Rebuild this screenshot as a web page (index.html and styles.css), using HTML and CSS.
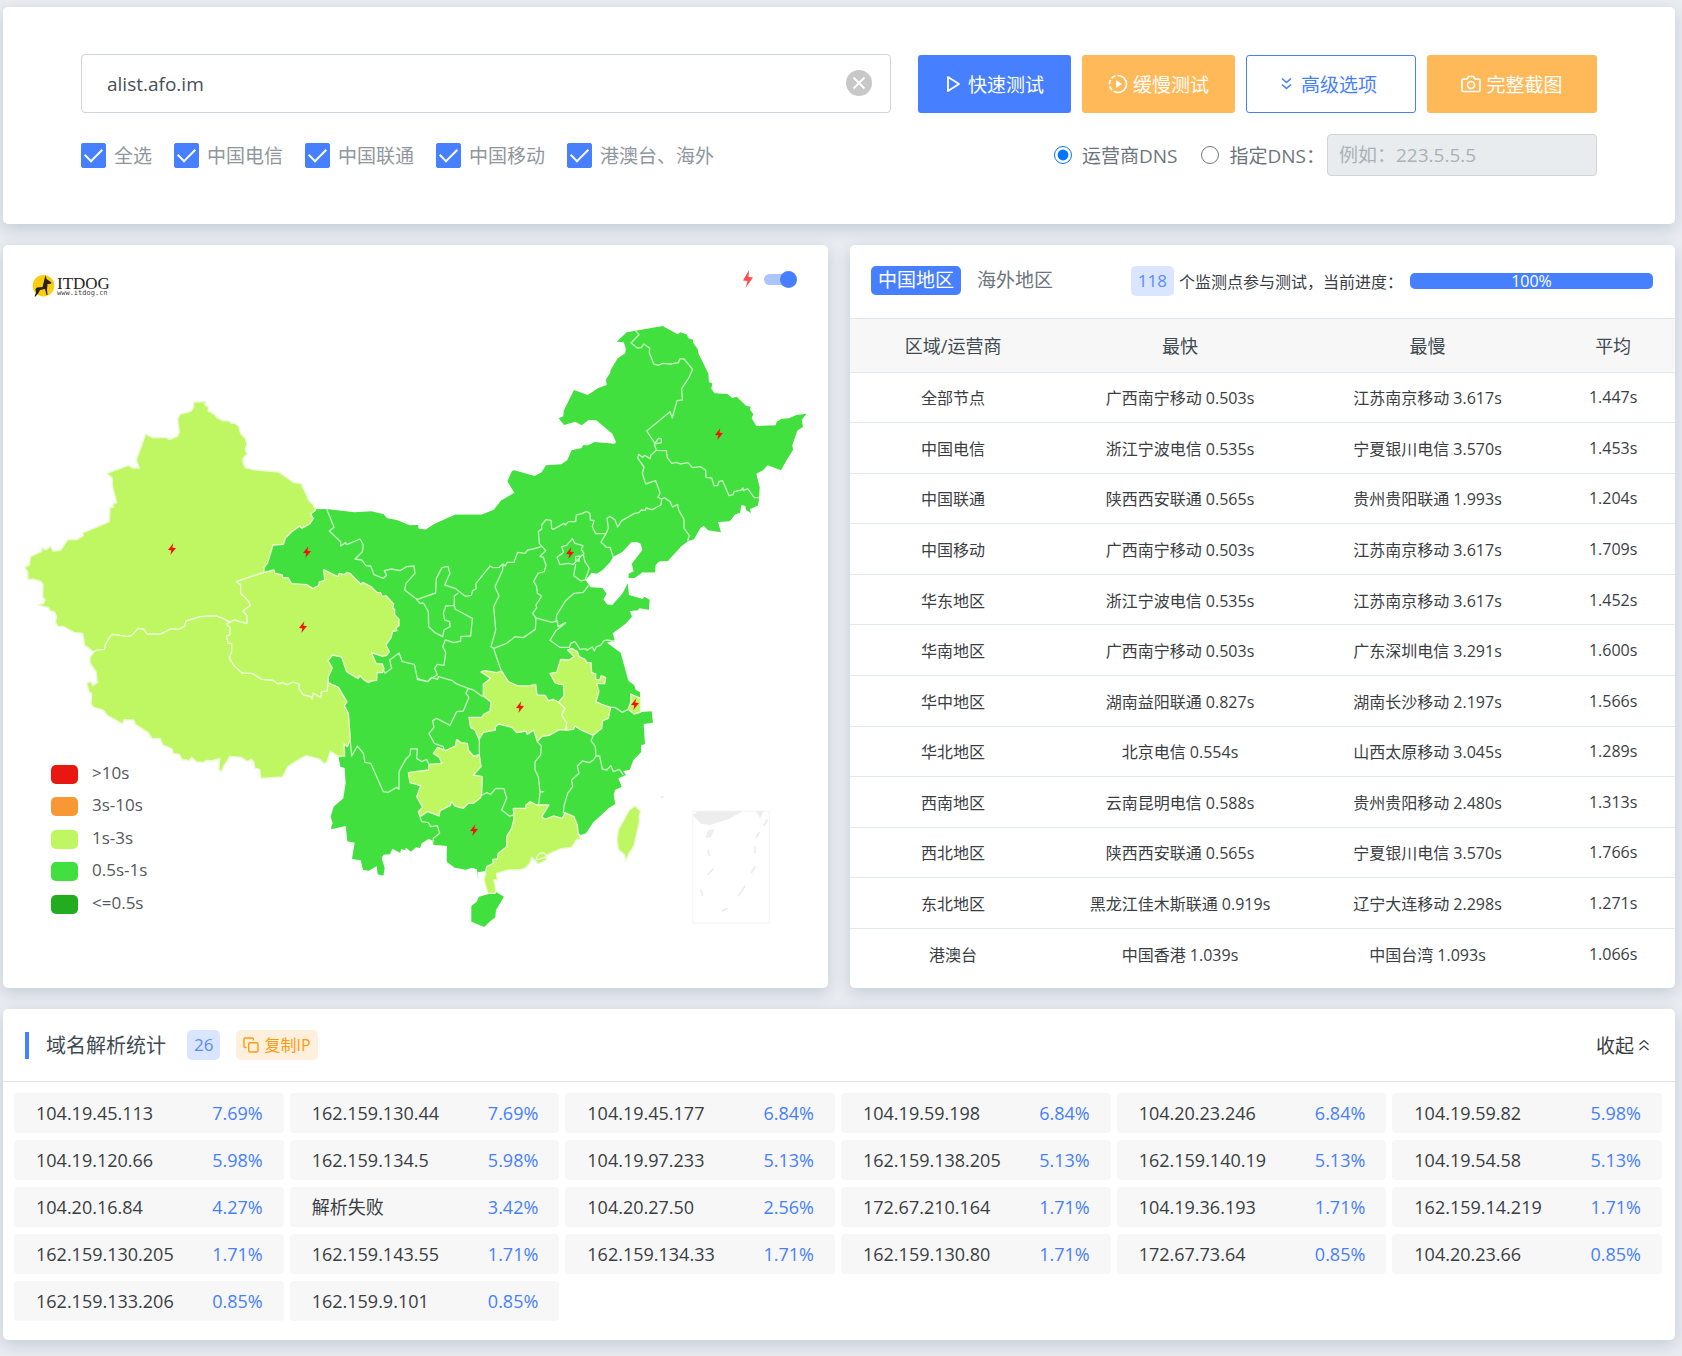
FILE: index.html
```html
<!DOCTYPE html>
<html lang="zh-CN">
<head>
    <meta charset="UTF-8">
    <meta name="viewport" content="width=device-width, initial-scale=1.0">
    <title>ITDOG 网站测速</title>
    <link rel="stylesheet" href="styles.css">
</head>
<body>
    <form class="card search">
        <div class="search-row">
            <div class="host-box">
                <input type="text" class="host" id="host" value="alist.afo.im" aria-label="域名">
                <button type="button" class="clear" aria-label="清空">
                    <svg viewBox="0 0 26 26" width="26" height="26"><circle cx="13" cy="13" r="13" fill="#c8c8c8"/><path d="M7.500 7.500 18.500 18.500M18.500 7.500 7.500 18.500" stroke="#fff" stroke-width="1.800"/></svg>
                </button>
            </div>
            <div class="buttons">
                <button type="button" class="btn btn-blue">
                    <svg viewBox="0 0 18 18" width="18" height="18"><path d="M3 2v14l11-7z" fill="none" stroke="currentColor" stroke-width="1.800" stroke-linejoin="round"/></svg>
                    快速测试
                </button>
                <button type="button" class="btn btn-orange">
                    <svg viewBox="0 0 20 20" width="20" height="20"><path d="M10 1.500a8.500 8.500 0 0 1 0 17" fill="none" stroke="currentColor" stroke-width="1.700"/><path d="M10 18.500a8.500 8.500 0 0 1 0-17" fill="none" stroke="currentColor" stroke-width="1.700" stroke-dasharray="4.500 2"/><path d="M8 6v8l6-4z" fill="currentColor"/></svg>
                    缓慢测试
                </button>
                <button type="button" class="btn btn-outline">
                    <svg viewBox="0 0 12 20" width="12" height="20"><path d="m1 4.500 4.500 4 4.500-4M1 10.500l4.500 4 4.500-4" fill="none" stroke="currentColor" stroke-width="1.600"/></svg>
                    高级选项
                </button>
                <button type="button" class="btn btn-orange">
                    <svg viewBox="0 0 20 18" width="20" height="18"><path d="M2.500 4H6l1.500-2.500h5L14 4h3.500q1.500 0 1.500 1.500v9.500q0 1.500-1.500 1.500h-15Q1 16.500 1 15V5.500Q1 4 2.500 4z" fill="none" stroke="currentColor" stroke-width="1.700"/><circle cx="10" cy="10" r="3.500" fill="none" stroke="currentColor" stroke-width="1.700"/></svg>
                    完整截图
                </button>
            </div>
        </div>
        <div class="option-row">
            <div class="checks">
                <label><input type="checkbox" checked>全选</label>
                <label><input type="checkbox" checked>中国电信</label>
                <label><input type="checkbox" checked>中国联通</label>
                <label><input type="checkbox" checked>中国移动</label>
                <label><input type="checkbox" checked>港澳台、海外</label>
            </div>
            <div class="dns">
                <label><input type="radio" name="dns" checked>运营商DNS</label>
                <label><input type="radio" name="dns">指定DNS：</label>
                <input type="text" class="dns-input" placeholder="例如：223.5.5.5" aria-label="DNS" disabled>
            </div>
        </div>
    </form>

    <div class="main">
        <div class="card map-card">
            <svg class="map" viewBox="3 245 825 743">
                <defs>
                    <path id="bolt" d="M4-17-12 3-2 4-5 18 12-3 1-4z" fill="#f5130b"/>
                </defs>

                <!-- logo -->
                <circle cx="43.500" cy="285.700" r="10.800" fill="#fbcd10"/>
                <path d="M45.500 275l1 4 5 3.500-.500 1.200-3.500.300-.500 6 .5 5h-1l-1.500-6-5 1-1.500 3-3 3.500h-1l1.500-4-.5-3.500 1.500-1.500 5.500-.500z" fill="#2b2014"/>
                <text class="logo-text" x="57" y="289">ITDOG</text>
                <text class="logo-url" x="57" y="295">www.itdog.cn</text>

                <!-- green base -->
                <g class="green" transform="translate(400 310) scale(.33333)">
                    <path d="M0 640 32 648 54 645 55 656 77 659 105 641 166 614 245 614 281 600 305 571 343 548 322 514 336 483 343 481 404 498 425 487 438 466 484 463 502 450 515 421 545 414 549 406 564 406 584 396 609 398 644 401 648 396 637 371 589 331 566 330 545 346 526 335 492 345 476 325 490 319 491 302 522 240 563 255 595 234 620 225 618 208 630 190 632 180 653 145 676 130 677 114 671 97 650 95 680 67 788 48 833 73 842 67 861 74 865 85 879 89 879 98 893 117 896 132 913 166 925 191 927 217 937 220 934 237 944 250 982 252 997 264 1010 260 1038 287 1052 290 1050 299 1060 312 1055 325 1069 348 1127 346 1130 335 1145 326 1166 325 1190 315 1220 311 1205 329 1209 350 1192 362 1177 405 1179 420 1160 450 1143 481 1103 466 1089 481 1069 491 1079 532 1077 570 1073 587 1050 597 1053 609 1038 600 1036 588 1024 585 1020 609 1006 613 989 634 954 636 963 667 924 661 911 647 901 655 882 688 865 693 821 726 804 753 777 754 767 766 765 787 730 787 735 690 600 690 0 700z"/>
                </g>
                <g class="green" transform="translate(300 500) scale(.33333)">
                    <path d="M46 28 80 27 163 37 215 34 251 43 261 55 291 60 329 76 354 75 355 86 377 89 405 71 466 44 545 44 581 30 605 0 1140-100 1140 143 1104 182 1077 184 1065 196 1065 217 1028 217 1004 234 986 235 986 221 1001 214 995 192 1027 150 1022 131 1011 126 994 127 967 156 940 170 930 187 908 210 890 221 875 218 857 241 872 262 908 264 920 282 910 298 921 313 937 315 968 280 983 250 987 285 1028 297 1033 290 1049 299 1047 329 1018 325 1014 331 990 333 996 350 976 372 938 400 944 421 921 428 962 458 985 542 1003 556 1007 569 1020 577 1023 636 1055 634 1059 668 1031 672 1035 733 1023 735 1023 757 1000 780 989 810 970 813 978 825 955 835 965 860 945 870 941 885 946 912 925 925 920 930 880 967 858 1000 842 1005 800 960 640 1080 560 1112 534 1117 535 1140 531 1108 515 1103 498 1109 464 1103 440 1085 441 1038 400 1034 398 1022 387 1016 365 1030 360 1045 349 1041 333 1055 318 1043 315 1051 303 1047 301 1059 277 1046 270 1063 250 1064 245 1074 254 1105 250 1127 233 1123 230 1098 207 1112 189 1110 182 1081 156 1077 164 1028 142 1024 137 978 94 988 93 983 98 970 92 950 101 920 130 895 137 850 134 804 121 800 115 768 140 720 100 600 70 470-100 260-108 217-115 180-60 110 30 35z"/>
                    <path d="M537 1190 588 1176 612 1190 588 1230 586 1252 568 1266 553 1281 514 1265 514 1218 530 1205z"/>
                </g>

                <!-- west: Xinjiang, Tibet, Qinghai -->
                <g class="lime" transform="translate(0 380) scale(.33333)">
                    <path d="M581 66 619 65 614 74 626 82 624 92 643 103 652 114 670 123 686 122 692 130 705 130 716 139 722 161 736 176 741 193 736 207 741 222 729 235 729 246 735 263 760 269 836 276 882 308 905 311 907 323 914 332 926 361 939 374 946 386 945 392 932 402 940 415 930 431 905 445 900 438 875 455 857 473 850 493 819 495 803 548 792 563 792 577 709 605 722 613 722 640 743 660 752 676 729 693 742 708 741 731 702 720 690 727 670 716 648 708 602 710 558 723 554 739 536 748 514 746 481 763 441 762 431 748 414 745 396 766 384 770 337 763 330 770 316 795 314 808 289 811 282 816 254 796 248 760 221 757 190 739 174 740 167 728 169 709 163 696 149 692 146 683 112 675 131 670 136 659 128 653 129 613 123 605 100 597 84 600 83 575 74 562 88 555 91 530 125 514 125 503 137 510 152 499 159 514 183 510 203 479 230 479 250 467 249 459 328 425 330 383 340 382 339 372 350 367 337 318 337 294 320 280 386 256 397 264 418 264 409 241 437 162 458 173 500 173 508 179 531 170 538 158 533 116 541 102 573 94 581 81z"/>
                    <path d="M282 816 289 811 314 808 316 795 330 770 337 763 384 770 396 766 414 745 431 748 441 762 481 763 514 746 536 748 554 739 558 723 602 710 648 708 670 716 690 727 679 732 690 742 690 764 680 768 684 790 695 790 695 815 688 834 703 858 727 879 757 880 786 898 817 900 835 912 846 907 861 914 881 906 899 913 896 925 911 945 932 949 936 957 940 939 962 952 964 935 981 933 984 908 1015 922 1041 965 1033 977 1045 1000 1051 1078 1042 1100 1032 1092 1034 1128 1015 1130 991 1113 981 1147 972 1151 960 1138 920 1127 901 1136 863 1160 848 1191 783 1195 779 1168 764 1164 762 1147 754 1137 743 1145 723 1132 690 1129 670 1160 665 1176 656 1168 659 1135 635 1143 620 1141 610 1147 590 1146 575 1132 566 1144 556 1138 548 1141 538 1123 519 1120 517 1107 488 1095 481 1075 457 1077 444 1058 406 1033 401 1020 372 1019 368 1032 323 1007 309 990 281 982 273 971 275 941 268 936 260 910 272 904 278 917 292 908 288 875 270 849 270 831z"/>
                    <path d="M792 577 822 570 825 580 847 585 848 593 864 593 875 611 920 614 939 626 956 617 958 606 974 601 971 569 1013 590 1018 580 1032 584 1042 577 1051 581 1083 613 1088 607 1113 620 1130 637 1142 638 1147 650 1158 647 1181 672 1178 685 1184 688 1184 704 1197 718 1197 737 1188 743 1191 752 1178 754 1173 773 1158 795 1168 815 1160 826 1148 829 1114 818 1129 851 1147 852 1152 866 1148 878 1131 877 1130 901 1112 903 1106 908 1090 898 1080 887 1074 896 1040 875 1025 831 998 825 984 842 997 864 985 890 984 908 981 933 964 935 962 952 940 939 936 957 932 949 911 945 896 925 899 913 881 906 861 914 846 907 835 912 817 900 786 898 757 880 727 879 703 858 688 834 695 815 695 790 684 790 680 768 690 764 690 742 679 732 690 727 702 720 741 731 742 708 729 693 752 676 743 660 722 640 722 613 709 605z"/>
                </g>

                <!-- Hubei, Anhui, Guizhou, Guangdong, Shanghai, Taiwan -->
                <g class="lime" transform="translate(300 500) scale(.33333)">
                    <path d="M543 516 555 512 590 518 605 513 625 545 655 558 690 557 707 553 711 585 735 586 745 602 760 598 775 606 795 625 785 645 800 668 798 690 778 689 750 705 725 710 712 725 701 690 682 703 678 693 650 698 635 682 597 672 586 680 586 690 550 697 537 718 525 690 512 682 507 652 545 652 553 642 570 633 573 606 550 588 550 553 572 535z"/>
                    <path d="M803 450 815 445 832 455 838 470 855 478 860 488 873 488 875 518 887 522 887 538 900 540 903 527 917 533 914 551 890 551 897 575 888 605 905 613 932 622 925 655 908 662 905 685 880 706 843 690 825 678 820 688 798 690 800 668 785 645 795 625 775 606 792 588 790 553 778 553 765 548 750 520 770 517 782 478 808 480 822 470z"/>
                    <path d="M325 818 385 810 387 793 425 790 418 772 400 760 413 742 437 752 466 738 470 718 483 728 502 730 505 750 520 768 538 765 543 800 520 825 547 830 545 885 540 895 520 910 505 910 490 925 465 918 455 905 450 917 420 932 417 948 383 935 360 950 355 935 368 922 350 890 362 857 330 848z"/>
                    <path d="M640 925 677 925 678 915 690 905 710 915 747 915 725 950 735 958 760 948 787 955 795 938 822 950 832 975 835 1005 845 1019 830 1018 815 1042 780 1047 740 1065 738 1080 715 1092 695 1072 690 1090 675 1105 660 1110 625 1110 590 1120 592 1140 582 1140 588 1172 585 1180 563 1180 552 1140 560 1100 580 1090 578 1078 592 1077 595 1060 620 1040 620 1010 635 985 642 955z"/>
                    <path d="M708 1078Q715 1055 733 1059L740 1070 718 1078z"/>
                    <path d="M992 582 1022 595 1022 636 1003 642 984 628 992 608z"/>
                    <path d="M1005 917 1022 934 1017 950 1019 962 1001 1040 986 1062 977 1085 974 1065 955 1048 951 1020 955 990 988 930z"/>
                </g>

                <!-- province borders -->
                <g class="border" transform="translate(400 310) scale(.33333)">
                    <path d="M707 62 717 74 693 99 712 114 724 113 731 102 749 114 748 128 761 162 775 166 788 160 812 162 835 158 840 146 852 147 878 178 866 204 845 236 847 270 831 272 817 324 810 305 740 363 765 400 775 385 784 386 784 398 763 402 769 421 799 422 802 443 815 460 830 457 841 462 864 458 877 473 902 470 917 481 918 502 935 504 942 527 953 527 957 514 968 512 987 557 999 554 1002 545 1024 540 1029 534 1030 542 1043 536 1063 563 1077 563"/>
                    <path d="M769 421 752 436 751 446 734 436 727 442 716 433 713 444 732 471 727 490 737 522 767 512 780 548 774 562 785 567 793 563 810 575 818 591 833 583 836 600 852 628 852 655 868 677 863 692"/>
                    <path d="M785 567 783 585 756 599 738 594 736 601 724 600 717 608 704 610 665 632 653 651 645 630 630 619 621 625 625 654 618 671 603 696 619 712 630 712 640 742"/>
                    <path d="M618 671 587 671 577 650 582 632 571 630 570 611 560 604 546 611 529 615 527 635 505 635 496 645 492 640 460 658 455 655 453 631 438 629 425 645 425 658 415 664 418 700 437 722 420 739 430 742 438 765 433 785 414 790 401 815 410 830 412 850 425 858 408 885 410 893 398 910 408 924 456 937 472 932 474 950 497 938 467 963 450 991 479 1012 508 1012 513 999 525 995 540 1018 558 1016 560 1021 577 1011 583 1023 589 1010 602 1006 612 992 622 990 643 994"/>
                    <path d="M424 710 399 717 383 720 375 730 353 727 342 757 321 757 316 768 309 762 308 780 285 830 297 858 281 890 287 960 273 1010 281 1015 289 1040 303 1080"/>
                    <path d="M309 762 298 772 278 773 270 768 262 778 228 820 228 837 218 842 214 856 196 859 165 835 134 825 150 790 144 769 126 773 109 805 107 849 50 869 60 880 70 879 85 905 86 950 105 968 128 980 132 960 150 950 149 935 134 930 130 910 137 888 163 886 163 858 175 849"/>
                    <path d="M163 886 165 897 217 925 212 978 182 980 182 993 162 998 136 990 128 1010 137 1027 132 1066 112 1063 104 1075 112 1095 93 1105 83 1115 50 1108"/>
                    <path d="M281 1015 320 1000 345 980 370 983 406 958 408 924M468 938 470 915 497 872 522 850 550 847 566 826"/>
                    <path d="M517 686 525 700 549 707 544 718 552 730 540 742 520 763 505 760 480 764 471 742 491 727 485 710 500 706zM527 762 521 797 543 813 556 809 568 775 555 755 550 735M527 740 540 738 537 753 527 752z"/>
                </g>
                <g class="border" transform="translate(300 500) scale(.33333)">
                    <path d="M80 27 102 82 88 93 122 125 122 138 137 128 140 134 180 117 190 135 187 155 165 177 185 180 198 197 212 198 222 224 250 235 260 226 253 212 275 207 300 212 320 200 342 198 345 220 318 250 314 270 350 298"/>
                    <path d="M248 505 255 520 275 505 269 480 297 459 307 485 343 493 352 535 383 545 395 532 413 538 415 530 457 542 470 552 505 565 520 570 548 590"/>
                    <path d="M505 565 498 580 507 592 490 633 470 635 450 676 410 655 398 662 402 682 387 700 403 730 430 740 432 752M525 768 538 765 538 715"/>
                    <path d="M150 715 155 768 172 738 190 760 195 787 212 790 250 875 264 877 290 862 297 868 297 815 317 778 330 765 332 746 352 747 350 775 365 785 380 778 387 795"/>
                    <path d="M712 725 724 738 722 765 705 785 705 810 715 830 720 875 731 875 720 877 716 915M547 885 560 878 572 883 587 865 612 866 620 895 605 930 628 948 642 945"/>
                    <path d="M360 950 365 965 385 968 392 980 412 977 419 1000 400 1015 398 1030"/>
                    <path d="M880 706 873 722 886 740 888 768 880 780 868 788 847 783 832 798 837 820 815 840 818 860 803 880 792 918 790 940M888 768 899 768 907 807 920 810 933 797 940 815 958 808 970 825M932 622 945 622 967 637 984 628"/>
                </g>

                <!-- South China Sea inset -->
                <g transform="translate(600 740) scale(.33333)">
                    <rect x="278" y="214" width="230" height="335" fill="none" stroke="#f6f6f6" stroke-width="4"/>
                    <path d="M278 226 293 214H428L388 236 330 255 303 251zM468 214h22l-9 22zM323 272l20-5-11 25-15 1z" fill="#ededed"/>
                    <path d="M502 238 491 258M478 277l-10 15M465 318v21M466 379l-12 20M435 438l-20 31M383 505l-18 9M303 448l5 20M340 386l-18 19M323 330l6 19M182 172l9-2" stroke="#ececec" stroke-width="5"/>
                </g>

                <!-- fastest / slowest nodes -->
                <use href="#bolt" transform="translate(172 549) scale(.33333)"/>
                <use href="#bolt" transform="translate(307 552) scale(.33333)"/>
                <use href="#bolt" transform="translate(303 627) scale(.33333)"/>
                <use href="#bolt" transform="translate(719 434) scale(.33333)"/>
                <use href="#bolt" transform="translate(570 553) scale(.33333)"/>
                <use href="#bolt" transform="translate(635 704) scale(.33333)"/>
                <use href="#bolt" transform="translate(520 707) scale(.33333)"/>
                <use href="#bolt" transform="translate(474 830) scale(.33333)"/>

                <!-- legend -->
                <g class="legend">
                    <rect x="51" y="765" width="27" height="19" rx="5" fill="#e81712"/><text x="92" y="779">&gt;10s</text>
                    <rect x="51" y="797" width="27" height="19" rx="5" fill="#f89834"/><text x="92" y="811">3s-10s</text>
                    <rect x="51" y="830" width="27" height="19" rx="5" fill="#bff763"/><text x="92" y="844">1s-3s</text>
                    <rect x="51" y="862" width="27" height="19" rx="5" fill="#42e03e"/><text x="92" y="876">0.5s-1s</text>
                    <rect x="51" y="895" width="27" height="19" rx="5" fill="#22ac1e"/><text x="92" y="909">&lt;=0.5s</text>
                </g>
            </svg>
            <label class="node-switch">
                <svg viewBox="0 0 10 18" width="10" height="18"><path d="M6 0 0 10.500l4.500.5L2.500 18 10 7.500 5.500 7z" fill="#ff4d4f"/></svg>
                <input type="checkbox" aria-label="显示节点" checked>
            </label>
        </div>

        <div class="card result">
            <div class="result-head">
                <button type="button" class="tab active">中国地区</button>
                <button type="button" class="tab">海外地区</button>
                <div class="status">
                    <span class="badge">118</span>
                    <span>个监测点参与测试，当前进度：</span>
                </div>
                <div class="progress">100%</div>
            </div>
            <div class="table-box">
                <table>
                    <thead>
                        <tr><th>区域/运营商</th><th>最快</th><th>最慢</th><th>平均</th></tr>
                    </thead>
                    <tbody>
                        <tr><td>全部节点</td><td>广西南宁移动 0.503s</td><td>江苏南京移动 3.617s</td><td>1.447s</td></tr>
                        <tr><td>中国电信</td><td>浙江宁波电信 0.535s</td><td>宁夏银川电信 3.570s</td><td>1.453s</td></tr>
                        <tr><td>中国联通</td><td>陕西西安联通 0.565s</td><td>贵州贵阳联通 1.993s</td><td>1.204s</td></tr>
                        <tr><td>中国移动</td><td>广西南宁移动 0.503s</td><td>江苏南京移动 3.617s</td><td>1.709s</td></tr>
                        <tr><td>华东地区</td><td>浙江宁波电信 0.535s</td><td>江苏南京移动 3.617s</td><td>1.452s</td></tr>
                        <tr><td>华南地区</td><td>广西南宁移动 0.503s</td><td>广东深圳电信 3.291s</td><td>1.600s</td></tr>
                        <tr><td>华中地区</td><td>湖南益阳联通 0.827s</td><td>湖南长沙移动 2.197s</td><td>1.566s</td></tr>
                        <tr><td>华北地区</td><td>北京电信 0.554s</td><td>山西太原移动 3.045s</td><td>1.289s</td></tr>
                        <tr><td>西南地区</td><td>云南昆明电信 0.588s</td><td>贵州贵阳移动 2.480s</td><td>1.313s</td></tr>
                        <tr><td>西北地区</td><td>陕西西安联通 0.565s</td><td>宁夏银川电信 3.570s</td><td>1.766s</td></tr>
                        <tr><td>东北地区</td><td>黑龙江佳木斯联通 0.919s</td><td>辽宁大连移动 2.298s</td><td>1.271s</td></tr>
                        <tr><td>港澳台</td><td>中国香港 1.039s</td><td>中国台湾 1.093s</td><td>1.066s</td></tr>
                    </tbody>
                </table>
            </div>
        </div>
    </div>

    <div class="card stats">
        <div class="stats-head">
            <h2>域名解析统计</h2>
            <span class="badge">26</span>
            <button type="button" class="copy">
                <svg viewBox="0 0 16 16" width="16" height="16"><g fill="none" stroke="currentColor" stroke-width="1.400"><rect x="5.700" y="5.700" width="9.300" height="9.300" rx="1.500"/><path d="M3.500 10.500h-1Q1 10.500 1 9V2.500Q1 1 2.500 1H9q1.500 0 1.500 1.500v1"/></g></svg>
                复制IP
            </button>
            <button type="button" class="fold">
                收起
                <svg viewBox="0 0 12 14" width="12" height="14"><path d="m1.500 6.500 4.500-4 4.500 4M1.500 12l4.500-4 4.500 4" fill="none" stroke="currentColor" stroke-width="1.300"/></svg>
            </button>
        </div>
        <ul class="ip-list">
            <li>104.19.45.113<span>7.69%</span></li>
            <li>162.159.130.44<span>7.69%</span></li>
            <li>104.19.45.177<span>6.84%</span></li>
            <li>104.19.59.198<span>6.84%</span></li>
            <li>104.20.23.246<span>6.84%</span></li>
            <li>104.19.59.82<span>5.98%</span></li>
            <li>104.19.120.66<span>5.98%</span></li>
            <li>162.159.134.5<span>5.98%</span></li>
            <li>104.19.97.233<span>5.13%</span></li>
            <li>162.159.138.205<span>5.13%</span></li>
            <li>162.159.140.19<span>5.13%</span></li>
            <li>104.19.54.58<span>5.13%</span></li>
            <li>104.20.16.84<span>4.27%</span></li>
            <li>解析失败<span>3.42%</span></li>
            <li>104.20.27.50<span>2.56%</span></li>
            <li>172.67.210.164<span>1.71%</span></li>
            <li>104.19.36.193<span>1.71%</span></li>
            <li>162.159.14.219<span>1.71%</span></li>
            <li>162.159.130.205<span>1.71%</span></li>
            <li>162.159.143.55<span>1.71%</span></li>
            <li>162.159.134.33<span>1.71%</span></li>
            <li>162.159.130.80<span>1.71%</span></li>
            <li>172.67.73.64<span>0.85%</span></li>
            <li>104.20.23.66<span>0.85%</span></li>
            <li>162.159.133.206<span>0.85%</span></li>
            <li>162.159.9.101<span>0.85%</span></li>
        </ul>
    </div>
</body>
</html>
```
FILE: styles.css
```css
* {
    box-sizing: border-box;
}
body {
    margin: 0;
    padding: 7px 7px 16px 3px;
    background: #e9ecf1;
    color: #3a3e43;
    font-family: "Open Sans", "Noto Sans CJK SC", sans-serif;
    font-size: 16px;
}
button, input {
    font-family: inherit;
    font-size: inherit;
}
button {
    border: 0;
    background: none;
    padding: 0;
    color: inherit;
    cursor: pointer;
}
.card {
    background: #fff;
    border-radius: 5px;
    box-shadow: 0 5px 16px rgba(8, 41, 66, 0.16);
}

/* 搜索 */
.search {
    padding: 47px 78px 48px;
    font-size: 19px;
}
.search-row {
    display: flex;
    gap: 27px;
}
.host-box {
    position: relative;
    flex: 1;
}
.host {
    width: 100%;
    height: 59px;
    padding: 0 60px 0 25px;
    border: 1px solid #ced4da;
    border-radius: 4px;
    color: #495057;
}
.clear {
    position: absolute;
    right: 19px;
    top: 16px;
    height: 26px;
}
.clear svg {
    display: block;
}
.buttons {
    display: flex;
    gap: 11px;
    padding-top: 1px;
}
.btn {
    display: flex;
    align-items: center;
    justify-content: center;
    gap: 5px;
    width: 153px;
    border-radius: 3px;
    color: #fff;
}
.btn:nth-child(n+3) {
    width: 170px;
}
.btn-blue {
    background: #467fff;
}
.btn-orange {
    background: #ffb958;
}
.btn-outline {
    gap: 8px;
    padding-right: 4px;
    border: 1px solid #467fff;
    color: #467fff;
}
.option-row {
    display: flex;
    justify-content: space-between;
    align-items: center;
    margin-top: 21px;
}
.checks {
    display: flex;
    gap: 22px;
    color: #8f969d;
}
.checks label {
    display: flex;
    align-items: center;
    gap: 8px;
}
.checks input {
    appearance: none;
    display: grid;
    place-items: center;
    width: 25px;
    height: 25px;
    margin: 0;
    border: 1px solid #467fff;
    border-radius: 2px;
}
.checks input:checked {
    background: #467fff;
}
.checks input:checked::after {
    content: "";
    width: 15px;
    height: 8px;
    margin-bottom: 5px;
    border: solid #fff;
    border-width: 0 0 2px 2px;
    transform: rotate(-45deg);
}
.dns {
    display: flex;
    align-items: center;
    color: #6c757d;
}
.dns label {
    display: flex;
    align-items: center;
    gap: 10px;
    margin-right: 24px;
}
.dns label + label {
    margin-right: 2px;
}
.dns input[type="radio"] {
    width: 18px;
    height: 18px;
    margin: 0;
}
.dns-input {
    width: 270px;
    height: 42px;
    padding: 0 11px;
    border: 1px solid #ced4da;
    border-radius: 4px;
    background: #e9ecef;
}
.dns-input::placeholder {
    color: #a9b1b8;
}

/* 地图和结果 */
.main {
    display: grid;
    grid-template-columns: 1fr 1fr;
    gap: 22px;
    margin: 21px 0;
}
.map-card {
    position: relative;
}
.map {
    display: block;
    width: 100%;
}
.green path {
    fill: #42e03e;
}
.lime path {
    fill: #bff763;
    stroke: #ecfbd5;
    stroke-width: 4;
    stroke-linejoin: round;
}
.border path {
    fill: none;
    stroke: #c4f5c0;
    stroke-width: 4;
    stroke-linejoin: round;
}
.legend text {
    font-size: 17px;
    fill: #55585c;
}
.logo-text {
    font-family: "Liberation Serif", serif;
    font-size: 17px;
    fill: #2b2320;
}
.logo-url {
    font-family: "DejaVu Sans Mono", monospace;
    font-size: 7px;
    fill: #4a4340;
}
.node-switch {
    position: absolute;
    top: 25px;
    right: 31px;
    display: flex;
    align-items: center;
    gap: 11px;
}
.node-switch input {
    appearance: none;
    display: flex;
    align-items: center;
    justify-content: flex-end;
    width: 33px;
    height: 11px;
    margin: 0;
    border-radius: 6px;
    background: #adc5ff;
}
.node-switch input::after {
    content: "";
    width: 17px;
    height: 17px;
    border-radius: 50%;
    background: #467fff;
}
.result {
    display: flex;
    flex-direction: column;
    padding-bottom: 9px;
}
.result-head {
    display: flex;
    align-items: center;
    height: 73px;
    padding: 0 22px 2px 21px;
}
.tab {
    height: 29px;
    margin-right: 9px;
    padding: 0 7px;
    border-radius: 5px;
    color: #6c757d;
    font-size: 19px;
    line-height: 29px;
}
.tab.active {
    background: #467fff;
    color: #fff;
}
.status {
    display: flex;
    align-items: center;
    gap: 5px;
    margin-left: auto;
    margin-right: 7px;
}
.badge {
    padding: 0 7px;
    border-radius: 5px;
    background: #dae5ff;
    color: #5b8cff;
    font-size: 17px;
    line-height: 30px;
}
.progress {
    width: 243px;
    border-radius: 5px;
    background: #467fff;
    color: #fff;
    line-height: 16px;
    text-align: center;
}
.table-box {
    flex: 1;
    display: flex;
    border-top: 1px solid #e3e8ec;
}
table {
    width: 100%;
    border-collapse: collapse;
    table-layout: fixed;
    text-align: center;
}
th {
    width: 30%;
    height: 53px;
    padding: 0;
    background: #f7f7f7;
    color: #3d4a52;
    font-size: 18px;
    font-weight: 400;
}
th:first-child {
    width: 25%;
}
th:last-child {
    width: 15%;
}
td {
    height: 50px;
    padding: 0;
    border-top: 1px solid #e3e8ec;
}

/* 解析统计 */
.stats-head {
    display: flex;
    align-items: center;
    height: 73px;
    padding: 0 25px 0 22px;
    border-bottom: 1px solid #e0e3e6;
}
.stats-head h2 {
    margin: 0 21px 0 0;
    padding-left: 17px;
    border-left: 4px solid #467fff;
    color: #3d4a52;
    font-size: 20px;
    font-weight: 400;
    line-height: 27px;
}
.copy {
    display: flex;
    align-items: center;
    gap: 5px;
    margin-left: 16px;
    padding: 0 7px;
    border-radius: 5px;
    background: #fff0de;
    color: #ff9a0c;
    line-height: 30px;
}
.fold {
    display: flex;
    align-items: center;
    gap: 4px;
    margin-left: auto;
    font-size: 19px;
}
.ip-list {
    display: grid;
    grid-template-columns: repeat(6, 1fr);
    gap: 7px 6px;
    margin: 0;
    padding: 11px 13px 19px 11px;
    list-style: none;
    font-size: 18px;
}
.ip-list li {
    display: flex;
    justify-content: space-between;
    padding: 0 21px 0 22px;
    border-radius: 4px;
    background: #f7f7f7;
    line-height: 40px;
}
.ip-list span {
    color: #467fff;
}
```
